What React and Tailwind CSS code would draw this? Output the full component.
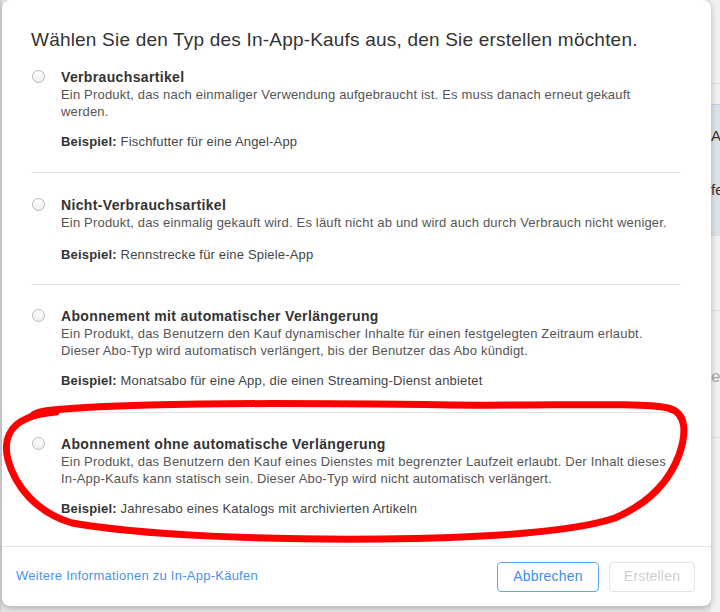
const options = [
  {
    title: "Verbrauchsartikel",
    lines: [
      "Ein Produkt, das nach einmaliger Verwendung aufgebraucht ist. Es muss danach erneut gekauft",
      "werden.",
    ],
    example: "Fischfutter für eine Angel-App",
    pad: "pt-[16px] pb-[22px]",
    exMt: "mt-[13px]",
  },
  {
    title: "Nicht-Verbrauchsartikel",
    lines: [
      "Ein Produkt, das einmalig gekauft wird. Es läuft nicht ab und wird auch durch Verbrauch nicht weniger.",
    ],
    example: "Rennstrecke für eine Spiele-App",
    pad: "pt-[23px] pb-[21px] border-t border-[#e3e3e3]",
    exMt: "mt-[15px]",
  },
  {
    title: "Abonnement mit automatischer Verlängerung",
    lines: [
      "Ein Produkt, das Benutzern den Kauf dynamischer Inhalte für einen festgelegten Zeitraum erlaubt.",
      "Dieser Abo-Typ wird automatisch verlängert, bis der Benutzer das Abo kündigt.",
    ],
    example: "Monatsabo für eine App, die einen Streaming-Dienst anbietet",
    pad: "pt-[22px] pb-[23px] border-t border-[#e3e3e3]",
    exMt: "mt-[13px]",
  },
  {
    title: "Abonnement ohne automatische Verlängerung",
    lines: [
      "Ein Produkt, das Benutzern den Kauf eines Dienstes mit begrenzter Laufzeit erlaubt. Der Inhalt dieses",
      "In-App-Kaufs kann statisch sein. Dieser Abo-Typ wird nicht automatisch verlängert.",
    ],
    example: "Jahresabo eines Katalogs mit archivierten Artikeln",
    pad: "pt-[22px] pb-[22px] border-t border-[#e3e3e3]",
    exMt: "mt-[13px]",
  },
];

const Option = ({ opt }) => (
  <div className={`flex gap-[16px] ${opt.pad}`}>
    <div className="mt-[2px] ml-[1px] w-[13px] h-[13px] shrink-0 rounded-full border border-[#b9b9b9] bg-gradient-to-b from-[#fdfdfd] to-[#eeeeee]" />
    <div>
      <div className="text-[14px] leading-[18px] font-bold text-[#333] tracking-[0.35px]">
        {opt.title}
      </div>
      {opt.lines.map((l) => (
        <div key={l} className="text-[13px] leading-[17px] text-[#555] tracking-[0.18px] whitespace-nowrap">
          {l}
        </div>
      ))}
      <div className={`${opt.exMt} text-[13px] leading-[17px] text-[#444] tracking-[0.18px]`}>
        <span className="font-semibold text-[#333]">Beispiel:</span> {opt.example}
      </div>
    </div>
  </div>
);

export default function App() {
  return (
    <div
      className="relative flex w-[720px] h-[612px] overflow-hidden bg-[#e6e6e6]"
      style={{ fontFamily: '"Liberation Sans", Arial, sans-serif' }}
    >
      {/* page behind the dialog */}
      <div className="w-[2px] shrink-0 bg-[#d6d6d6]" />

      {/* Dialog */}
      <div className="relative z-10 w-[709px] h-[606px] shrink-0 bg-white rounded-lg shadow-[0_2px_6px_rgba(0,0,0,0.25)] flex flex-col">
        <h1 className="pl-[29px] pt-[28px] text-[19px] leading-[24px] text-[#333] tracking-[0.2px]">
          Wählen Sie den Typ des In-App-Kaufs aus, den Sie erstellen möchten.
        </h1>
        <div className="ml-[29px] w-[650px]">
          {options.map((o) => (
            <Option key={o.title} opt={o} />
          ))}
        </div>
        <div className="flex-1" />
        <footer className="h-[60px] border-t border-[#e3e3e3] flex items-center justify-between pl-[14px] pr-[16px]">
          <a href="#" className="text-[13px] text-[#4a93e6] tracking-[0.25px] mt-[-1px]">
            Weitere Informationen zu In-App-Käufen
          </a>
          <div className="flex gap-[10px]">
            <button className="h-[30px] w-[102px] rounded border border-[#5ea6f0] text-[14px] text-[#3d8de6] tracking-[0.2px]">
              Abbrechen
            </button>
            <button className="h-[30px] w-[86px] rounded border border-[#e4e4e4] text-[14px] text-[#cfcfcf] tracking-[0.2px]">
              Erstellen
            </button>
          </div>
        </footer>
      </div>

      <div className="flex-1 min-w-0 flex flex-col bg-[#f1f1f1] overflow-hidden whitespace-nowrap">
        <div className="h-[83px] shrink-0" />
        <div className="h-[21px] shrink-0 border-t border-[#dcdcdc]" />
        <div className="h-[132px] shrink-0 bg-[#dde2e7] border-t border-[#bcd5ee] pt-[21px] text-[15px] leading-[20px] text-[#333]">
          <div>Ab</div>
          <div className="mt-[34px]">fe</div>
        </div>
        <div className="h-[74px] shrink-0" />
        <div className="h-[127px] shrink-0 border-t border-[#e0e0e0] pt-[55px] text-[17px] leading-[22px] text-[#aaa]">
          e
        </div>
        <div className="flex-1 border-t border-[#e0e0e0]" />
      </div>

      {/* hand-drawn red marking */}
      <svg className="absolute inset-0 z-20 pointer-events-none" width="720" height="612">
        <path
          d="M 32 416 C 36 412, 44 411, 52 410 C 140 402, 300 403, 450 405 C 560 406, 640 402, 668 408 C 688 413, 686 435, 679 455 C 668 485, 645 505, 615 518 C 570 533, 480 538, 380 539 C 260 540, 140 535, 72 523 C 35 512, 15 485, 8 460 C 3 440, 10 425, 28 418 C 36 414, 44 413, 56 412"
          fill="none"
          stroke="#ff0000"
          strokeWidth="7"
          strokeLinecap="round"
          strokeLinejoin="round"
        />
      </svg>
    </div>
  );
}
